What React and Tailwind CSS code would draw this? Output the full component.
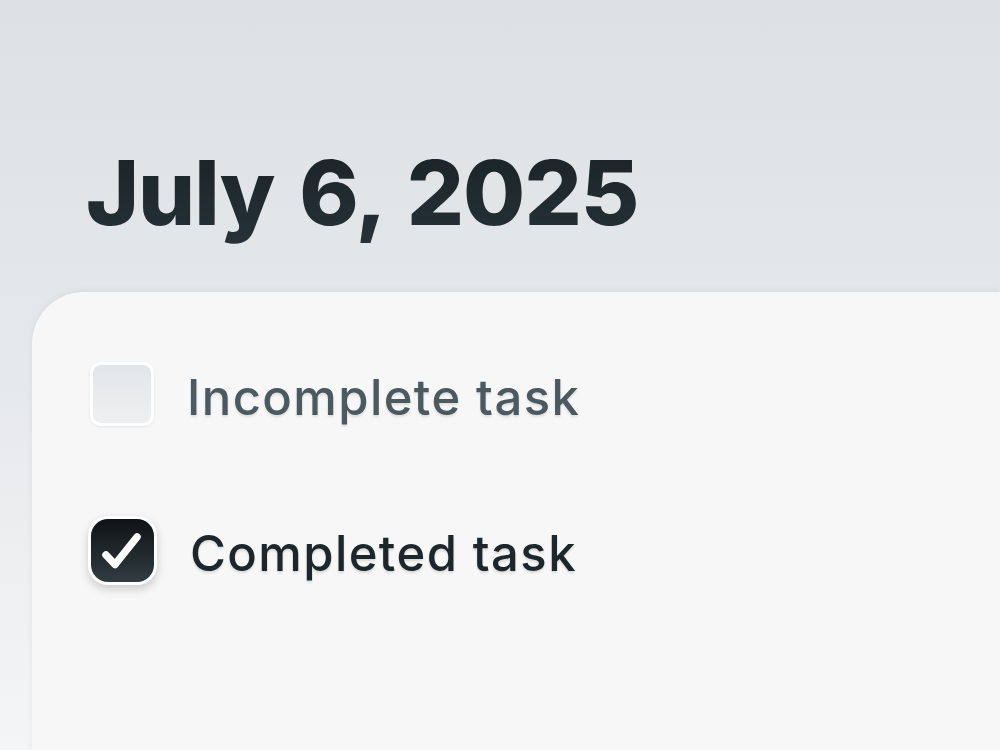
import React from 'react';

const Check = ({ done }) =>
    done ? (
        <div className="w-[69px] h-[69px] rounded-[20px] bg-white p-[3px] shadow-[0_4px_10px_rgba(0,0,0,0.18)] shrink-0">
            <div className="w-full h-full rounded-[17px] bg-gradient-to-b from-[#101315] to-[#313c42] flex items-center justify-center">
                <svg width="63" height="63" viewBox="0 0 63 63" fill="none" stroke="white" strokeWidth="7.5" strokeLinecap="round" strokeLinejoin="round">
                    <path d="M15 36l9 9.5L46 18" />
                </svg>
            </div>
        </div>
    ) : (
        <div className="w-[64px] h-[64px] rounded-[10px] bg-white p-[3px] shadow-[0_1px_3px_rgba(0,0,0,0.08)] shrink-0 ml-[2px]">
            <div className="w-full h-full rounded-[8px] bg-gradient-to-b from-[#e3e6e8] to-[#eef0f1]" />
        </div>
    );

const Task = ({ done, label }) => (
    <div className="flex items-center gap-[33px]">
        <Check done={done} />
        <span
            className={
                'pt-[6px] text-[49px] font-medium tracking-[1.4px] leading-none ' +
                (done ? 'text-[#1c262b] drop-shadow-[0_2px_1px_rgba(0,0,0,0.12)]' : 'text-[#4b5960] drop-shadow-[0_2px_1px_rgba(0,0,0,0.1)]')
            }
        >
            {label}
        </span>
    </div>
);

export default function App() {
    return (
        <div
            className="w-[1000px] h-[750px] overflow-hidden bg-gradient-to-b from-[#dce1e4] via-[#e6e9eb] to-[#f4f5f6] flex flex-col"
            style={{ fontFamily: 'Inter, "Noto Sans", sans-serif' }}
        >
            <h1 className="ml-[86px] pt-[148px] h-[292px] text-[90px] font-extrabold leading-none tracking-[-1px] [word-spacing:6px] bg-gradient-to-b from-[#0a0d0f] to-[#2c3a41] bg-clip-text text-transparent w-fit">
                July 6, 2025
            </h1>
            <div className="ml-[32px] flex-1 rounded-tl-[52px] bg-[#f7f7f8] shadow-[0_-1px_6px_rgba(0,0,0,0.06)] pl-[56px] pt-[70px] flex flex-col gap-[90px]">
                <Task done={false} label="Incomplete task" />
                <Task done label="Completed task" />
            </div>
        </div>
    );
}
